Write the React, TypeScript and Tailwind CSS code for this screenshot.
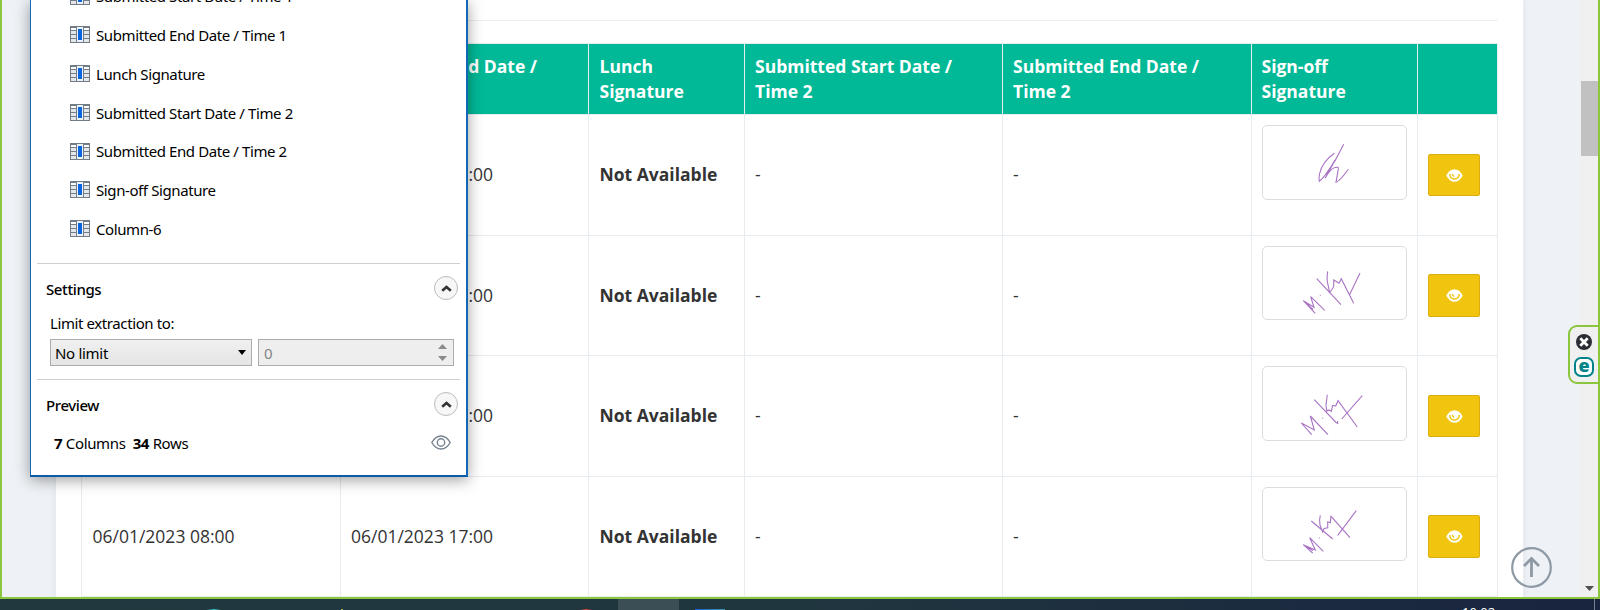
import React from "react";

const items = [
  "Submitted Start Date / Time 1",
  "Submitted End Date / Time 1",
  "Lunch Signature",
  "Submitted Start Date / Time 2",
  "Submitted End Date / Time 2",
  "Sign-off Signature",
  "Column-6",
];

const rows = [
  {
    start: "",
    end: "03/01/2023 17:00",
    signature:
      "M80.700 18.300L74 31L62 52.300M80.700 18.300L72 35L60 52M71.300 27.300Q59 36 56.500 48Q55.500 53 56.300 55.300Q63 50 72 34M62 52.300Q68 42 72 41.500Q76 40.500 75.300 43L73 56.300Q77 55 85.300 43.300",
  },
  {
    start: "",
    end: "04/01/2023 17:00",
    signature:
      "M52.300 66.300L40.300 53.700L51 60.300L47.700 49.700L61.700 63.300M40.300 53.700L50 62.500M56.800 48.300h1M53.700 31.700L78 57.700M64.700 24.300Q63.500 32 64.700 36.300L66.700 45.700L70.700 39.700V33L76 36.300L78.300 31.700L90.700 56.300M97 26L86.300 48.300",
  },
  {
    start: "",
    end: "05/01/2023 17:00",
    signature:
      "M48.700 67.700L38.300 56L51.300 63L47.300 49L65 67.700M59.200 51.300h1M51.300 32.700L73 55.500L74.700 56.300L74.500 54M64.300 27.700L63 38L63.700 44Q66 42 68.300 44.300L69.700 38.300L72.700 39L75 33.700L94.300 60M99.300 28.700L78.700 52",
  },
  {
    start: "06/01/2023 08:00",
    end: "06/01/2023 17:00",
    signature:
      "M49.700 65L40.300 56.700L52.300 62L46.700 49.700L60.300 63.300M40.300 56.700L50 62.500M55.800 50h1M48.300 33L69.700 51M57.300 27.300Q56 32 57 37L59.700 44L61 40.500L64.700 39.700V33.700L67.300 34.700L68 28.300L87 49.700M93.300 22.700L74.700 47.300",
  },
];

function ColumnIcon() {
  return (
    <svg className="block h-[17px] w-5 shrink-0" viewBox="0 0 20 17" shapeRendering="crispEdges">
      <rect width="20" height="17" fill="#737d88" />
      <rect x="1" y="2" width="5" height="2" fill="#fff" />
      <rect x="1" y="5" width="5" height="3" fill="#e4e7ea" />
      <rect x="1" y="9" width="5" height="3" fill="#e4e7ea" />
      <rect x="1" y="13" width="5" height="3" fill="#e4e7ea" />
      <rect x="14" y="2" width="5" height="2" fill="#fff" />
      <rect x="14" y="5" width="5" height="3" fill="#e4e7ea" />
      <rect x="14" y="9" width="5" height="3" fill="#e4e7ea" />
      <rect x="14" y="13" width="5" height="3" fill="#e4e7ea" />
      <rect x="7" y="1" width="6" height="15" fill="#e9f2fd" />
      <rect x="8" y="3" width="4" height="11" fill="#0a66e0" />
    </svg>
  );
}

function Collapse() {
  return (
    <span className="flex h-6 w-6 items-center justify-center rounded-full border border-[#bdbdbd] bg-[#f7f7f7]">
      <svg className="h-[7px] w-[11px]" viewBox="0 0 11 7">
        <path d="M1.200 5.800L5.500 2L9.800 5.800" fill="none" stroke="#333" strokeWidth="2.600" />
      </svg>
    </span>
  );
}

function Dialog() {
  return (
    <div className="absolute left-[30px] top-0 flex h-[477px] w-[438px] flex-col border-b-2 border-l border-r-2 border-[#1267b8] border-b-[#0d5aa6] bg-white font-['Noto_Sans','Open_Sans',sans-serif] text-[15px] tracking-[-0.4px] text-black shadow-[0_3px_14px_rgba(0,0,0,0.38)]">
      <div className="h-[263px] shrink-0 overflow-hidden pl-[39px]">
        <div className="-mt-[23.3px]">
          {items.map((t) => (
            <div key={t} className="flex h-[38.75px] items-center gap-[6px]">
              <ColumnIcon />
              <span className="whitespace-nowrap pt-px">{t}</span>
            </div>
          ))}
        </div>
      </div>
      <div className="mx-[6px] h-[116px] shrink-0 border-t border-[#cfcfcf]">
        <div className="flex items-start justify-between pl-[9px] pr-[2px] pt-[12px]">
          <span className="pt-[2px] font-medium">Settings</span>
          <Collapse />
        </div>
        <div className="pl-[13px] pt-[11px] leading-[22px]">Limit extraction to:</div>
        <div className="flex gap-[6px] pl-[13px] pt-[5px]">
          <div className="flex h-[27px] w-[202px] items-center justify-between border border-[#acacac] bg-linear-to-b from-[#f0f0f0] to-[#e5e5e5] pl-[4px] pr-[5px]">
            <span className="pt-[2px] tracking-[-0.3px]">No limit</span>
            <svg className="h-[5px] w-[8px]" viewBox="0 0 8 5"><path d="M0 0H8L4 5Z" /></svg>
          </div>
          <div className="flex h-[27px] w-[196px] items-center justify-between border border-[#acacac] bg-[#eee] pl-[5px] pr-[6px]">
            <span className="pt-[2px] text-[#838383]">0</span>
            <svg className="h-[17px] w-[9px]" viewBox="0 0 9 17">
              <path d="M0 5L4.500 0L9 5ZM0 12L4.500 17L9 12Z" fill="#8a8a8a" />
            </svg>
          </div>
        </div>
      </div>
      <div className="mx-[6px] border-t border-[#cfcfcf]">
        <div className="flex items-start justify-between pl-[9px] pr-[2px] pt-[12px]">
          <span className="pt-[2px] font-medium">Preview</span>
          <Collapse />
        </div>
        <div className="flex items-center justify-between pl-[17px] pr-[9px] pt-[15px]">
          <span className="tracking-[-0.35px]"><b>7</b> Columns&nbsp; <b>34</b> Rows</span>
          <svg className="h-[15px] w-5" viewBox="0 0 20 15" fill="none" stroke="#76838f" strokeWidth="1.4">
            <path d="M.8 7.500Q4.500 1 10 1T19.200 7.500Q15.500 14 10 14T.8 7.500Z" />
            <circle cx="10" cy="7.500" r="3.700" />
          </svg>
        </div>
      </div>
    </div>
  );
}

function ViewButton({ tall }: { tall: boolean }) {
  return (
    <span className={`flex w-[52px] items-center justify-center rounded-[2px] border border-[#dbae10] bg-[#f1c40f] ${tall ? "h-[43px]" : "h-[42px]"}`}>
      <svg className="h-[13px] w-[17px]" viewBox="0 0 17 13">
        <path d="M.3 6.500Q3.500 .2 8.500 .2T16.700 6.500Q13.500 12.800 8.500 12.800T.3 6.500Z" fill="#fff" />
        <path d="M3.700 5Q4 10 8.500 10T13.300 5" fill="none" stroke="#f1c40f" strokeWidth="1.500" />
        <path d="M6.300 4.800Q6.300 7 8.300 7.300" fill="none" stroke="#f1c40f" strokeWidth="1.200" />
      </svg>
    </span>
  );
}

const cell = "border-l border-[#e7ecf1]";
const grid = "grid grid-cols-[259px_248px_156px_258px_249px_166px_80px]";

function Table() {
  return (
    <div className="w-[1417px] border-r border-t border-[#e7ecf1]">
      <div className={`${grid} h-[70px] bg-[#02b997] font-bold leading-[25px] text-white`}>
        <div className={cell} />
        <div className={`${cell} pl-[10px] pt-[10px]`}>Submitted End Date /<br />Time 1</div>
        <div className={`${cell} pl-[10.500px] pt-[10px]`}>Lunch<br />Signature</div>
        <div className={`${cell} pl-[10px] pt-[10px]`}>Submitted Start Date /<br />Time 2</div>
        <div className={`${cell} pl-[10px] pt-[10px]`}>Submitted End Date /<br />Time 2</div>
        <div className={`${cell} pl-[9.500px] pt-[10px]`}>Sign-off<br />Signature</div>
        <div className={cell} />
      </div>
      {rows.map((r, i) => {
        const tall = i % 2 === 1;
        const text = `${cell} flex items-center ${tall ? "" : "pb-[2px]"}`;
        return (
          <div key={i} className={`${grid} ${tall ? "h-[120px]" : "h-[121px]"} border-t border-[#e7ecf1]`}>
            <div className={`${text} pl-[10.500px]`}>{r.start}</div>
            <div className={`${text} pl-[10px]`}>{r.end}</div>
            <div className={`${text} pl-[10.500px] font-bold`}>Not Available</div>
            <div className={`${text} pl-[10px]`}>-</div>
            <div className={`${text} pl-[10px]`}>-</div>
            <div className={`${cell} pl-[10px] pt-[10px]`}>
              <svg className={`block w-[145px] rounded-[5px] border border-[#ddd] ${tall ? "h-[74px]" : "h-[75px]"}`} viewBox={tall ? "0 0 143 72" : "0 0 143 73"}>
                <path d={r.signature} fill="none" stroke="#8437ab" strokeOpacity="0.7" strokeWidth="1.100" />
              </svg>
            </div>
            <div className={`${cell} flex items-center pl-[10px]`}><ViewButton tall={tall} /></div>
          </div>
        );
      })}
      <div className="h-px bg-[#e7ecf1]" />
    </div>
  );
}

export default function App() {
  return (
    <div className="relative flex h-[610px] w-[1600px] flex-col overflow-hidden bg-[#eef1f5] font-['Open_Sans',sans-serif] text-[17.5px] text-[#333]">
      <div className="flex h-[599px] shrink-0 overflow-hidden border-b-2 border-l-2 border-r-2 border-[#8cc63f]">
        <div className="ml-[54px] w-[1467px] shrink-0 bg-white pl-[25px] shadow-[0_0_4px_3px_#e6ebf0]">
          <div className="h-[43px] w-[1417px]">
            <div className="h-[21px] border-b border-[#eee]" />
          </div>
          <Table />
        </div>
        <div className="ml-auto flex w-[19px] flex-col items-end bg-[#f0f0f0] pt-[81px]">
          <div className="h-[75px] w-[17px] bg-[#c1c1c1]" />
          <svg className="mb-[6px] mr-1 mt-auto h-[5px] w-[9px]" viewBox="0 0 9 5"><path d="M0 0H9L4.500 5Z" fill="#505050" /></svg>
        </div>
      </div>
      <div className="flex h-[11px] shrink-0 items-end overflow-hidden bg-linear-to-r from-[#22383f] via-[#20363f] to-[#19243f]">
        <div className="ml-[207px] h-px w-[14px] bg-linear-to-r from-transparent via-[#35c0cc] to-transparent" />
        <div className="ml-[120px] h-px w-[2px] bg-[#a9b04e]" />
        <div className="ml-[237px] h-px w-[12px] bg-linear-to-r from-transparent via-[#d2493e] to-transparent" />
        <div className="ml-[26px] h-[11px] w-[61px] bg-white/12" />
        <div className="ml-[16px] h-px w-[30px] bg-linear-to-r from-[#1f5fd0] to-[#3f97b8]" />
        <div className="ml-auto h-[4px] w-[138px] font-['Noto_Sans',sans-serif] text-[13px] leading-[13px] text-white">
          10:02
        </div>
        <div className="absolute right-[5px] h-[11px] w-px bg-[#77808f]" />
      </div>
      <Dialog />
      <div className="absolute left-[1568px] top-[325px] flex h-[59px] w-[32px] flex-col items-center gap-[7px] rounded-l-[9px] border-2 border-[#8cc63f] bg-[#f0f0f0] pt-[7px]">
        <svg className="h-4 w-4 shrink-0" viewBox="0 0 16 16">
          <circle cx="8" cy="8" r="8" fill="#2a2d34" />
          <path d="M4.300 4.300L11.700 11.700M11.700 4.300L4.300 11.700" stroke="#fff" strokeWidth="2.800" />
        </svg>
        <span className="flex h-5 w-5 shrink-0 items-center justify-center rounded-[7px] border-2 border-[#008489] bg-white pb-[4px] text-[18px] font-extrabold leading-none text-[#008489]">e</span>
      </div>
      <svg className="absolute left-[1511px] top-[547px] h-[41px] w-[41px]" viewBox="0 0 41 41" fill="none" stroke="#8e99a5" strokeWidth="2.200">
        <circle cx="20.500" cy="20.500" r="19.300" />
        <path d="M20.500 30V12M13 19L20.500 11.500L28 19" strokeWidth="2.800" />
      </svg>
    </div>
  );
}
